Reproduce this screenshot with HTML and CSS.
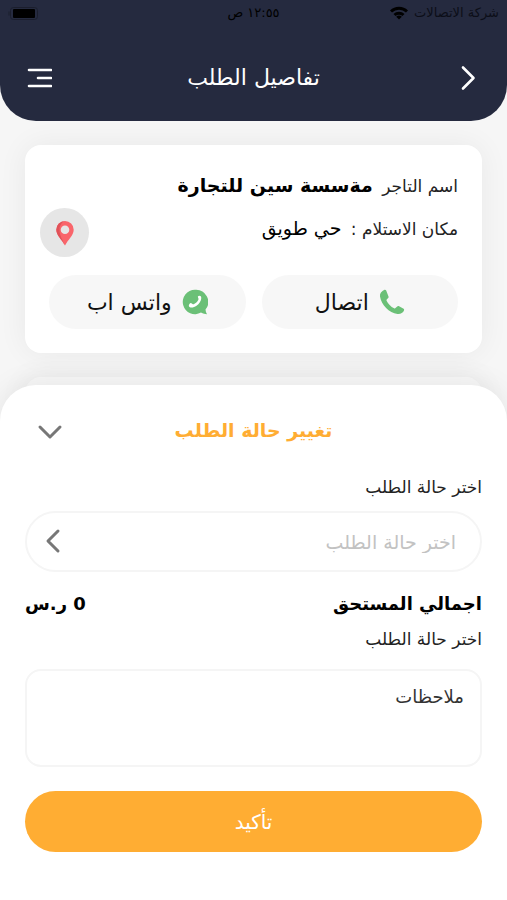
FILE: index.html
```html
<!DOCTYPE html>
<html lang="ar" dir="rtl">
  <head>
    <meta charset="UTF-8" />
    <meta name="viewport" content="width=device-width, initial-scale=1.0" />
    <title>تفاصيل الطلب</title>
    <link rel="stylesheet" href="styles.css">
  </head>
  <body>
    <header class="header">
      <div class="status-bar">
        <div class="carrier">
          <span>شركة الاتصالات</span>
          <svg width="18" height="14" viewBox="0 0 18 14" fill="none" stroke="#000" stroke-width="3">
            <path d="M1 5.5a11.5 11.5 0 0 1 16 0" />
            <path d="M4.5 9a6.5 6.5 0 0 1 9 0" />
            <path d="M9 13.5 6.2 10.8a4 4 0 0 1 5.6 0z" fill="#000" stroke="none" />
          </svg>
        </div>
        <span class="time">١٢:٥٥ ص</span>
        <svg class="battery" width="30" height="13" viewBox="0 0 30 13">
          <rect x="2.5" y="0.5" width="27" height="12" rx="3" fill="none" stroke="#1b1e2d" />
          <rect x="5" y="2" width="22" height="9" rx="1" fill="#000" />
          <path d="M1 4.5v4" stroke="#1b1e2d" />
        </svg>
      </div>
      <div class="nav-bar">
        <button class="icon-btn" type="button" aria-label="رجوع">
          <svg width="26" height="26" viewBox="0 0 26 26" fill="none" stroke="#fff" stroke-width="2.6" stroke-linecap="round" stroke-linejoin="round">
            <path d="M8 2.5L18.5 13 8 23.5" />
          </svg>
        </button>
        <h1>تفاصيل الطلب</h1>
        <button class="icon-btn" type="button" aria-label="القائمة">
          <svg width="26" height="26" viewBox="0 0 26 26" fill="none" stroke="#fff" stroke-width="2.6" stroke-linecap="round">
            <path d="M3 5h22M12 13h13M3 21h22" />
          </svg>
        </button>
      </div>
    </header>

    <main class="content">
      <section class="card">
        <div class="merchant">
          <div class="merchant-info">
            <p>اسم التاجر <strong>مةسسة سين للتجارة</strong></p>
            <p>مكان الاستلام : <span class="place">حي طويق</span></p>
          </div>
          <button class="map-btn" type="button" aria-label="الموقع على الخريطة">
            <svg width="20" height="26" viewBox="0 0 20 26">
              <path d="M10 1a8.7 8.7 0 0 0-8.7 8.7C1.3 15.5 7 19.5 10 25.5c3-6 8.7-10 8.7-15.8A8.7 8.7 0 0 0 10 1zm0 4.5a4.3 4.3 0 1 1 0 8.6 4.3 4.3 0 0 1 0-8.6z" fill="#f9656b" fill-rule="evenodd" />
              <path d="M10 1a8.7 8.7 0 0 0-8.7 8.7C1.3 15.5 7 19.5 10 25.5 7 19 4.5 15 4.5 9.7 4.5 5 7 2 10 1z" fill="#e05259" />
            </svg>
          </button>
        </div>
        <div class="actions">
          <button class="action" type="button">
            <svg width="26" height="26" viewBox="0 0 26 26">
              <path d="M5.5.8C2.5 2 .6 4.5 1 7.5 2.5 16 10 23.8 18.5 25c3 .4 5.5-1.5 6.5-3.6.3-.7.1-1.2-.4-1.6l-4.500-2.600c-.7-.4-1.400-.3-1.900.3l-1.700 1.600c-.4.5-.9.5-1.400.2-3.300-1.700-6-4.400-7.500-7.600-.3-.5-.1-1 .3-1.400l1.300-1.200c.5-.5.6-1 .3-1.600L7.200 1.500C6.800.8 6.200.6 5.500.8z" fill="#6bc077" />
            </svg>
            اتصال
          </button>
          <button class="action" type="button">
            <svg width="26" height="26" viewBox="0 0 26 26">
              <path d="M13 .8a12.2 12.2 0 1 0 6 22.8c2 1 4 1.7 6 1.7-.9-1.4-1.4-3-1.5-4.7A12.2 12.2 0 0 0 13 .8z" fill="#6bc077" />
              <path d="M17.2 6.800c-.8.1-1.500.6-1.300 1.300l.6 1.700c.1.5-.1 1-.4 1.500-1 1.700-2.300 3-4 3.800-.6.3-1.200.3-1.600-.1l-1.200-.8c-.6-.4-1.200 0-1.700.6-.9 1.200-1.100 2.500-.1 3.100 1.700 1 4.400.6 7-1.200 2.700-1.900 4.700-5 4.800-7.800 0-1.400-.8-2.200-2.100-2.100z" fill="#fff" />
            </svg>
            واتس اب
          </button>
        </div>
      </section>
      <section class="card card-next"></section>
    </main>

    <form class="sheet">
      <div class="sheet-head">
        <h2>تغيير حالة الطلب</h2>
        <button class="icon-btn" type="button" aria-label="إغلاق">
          <svg width="26" height="26" viewBox="0 0 26 26" fill="none" stroke="#777" stroke-width="3" stroke-linecap="round" stroke-linejoin="round">
            <path d="M3 10l10 10 10-10" />
          </svg>
        </button>
      </div>

      <label for="status">اختر حالة الطلب</label>
      <div class="select-wrap">
        <select id="status" name="status">
          <option value="">اختر حالة الطلب</option>
        </select>
        <svg class="select-arrow" width="26" height="26" viewBox="0 0 26 26" fill="none" stroke="#777" stroke-width="3" stroke-linecap="round" stroke-linejoin="round">
          <path d="M18 3L8 13l10 10" />
        </svg>
      </div>

      <div class="total">
        <span>اجمالي المستحق</span>
        <span>0 ر.س</span>
      </div>

      <label for="notes">اختر حالة الطلب</label>
      <textarea id="notes" name="notes" placeholder="ملاحظات"></textarea>

      <button class="submit" type="submit">تأكيد</button>
    </form>
  </body>
</html>
```
FILE: styles.css
```css
* {
  box-sizing: border-box;
  margin: 0;
  padding: 0;
}

body {
  min-height: 100vh;
  display: flex;
  flex-direction: column;
  background-color: #f6f6f6;
  color: #222;
  font-family: "DejaVu Sans", sans-serif;
  font-size: 17px;
  line-height: 24px;
}

button,
select,
textarea {
  font-family: inherit;
  color: inherit;
  border: none;
  background: none;
  outline: none;
}

button {
  cursor: pointer;
}

svg {
  display: block;
  flex-shrink: 0;
}

/* header */
.header {
  background-color: #252a3f;
  border-radius: 0 0 36px 36px;
  padding-bottom: 24px;
}

.status-bar {
  display: grid;
  grid-template-columns: 1fr auto 1fr;
  align-items: center;
  height: 26px;
  padding: 0 8px;
  color: #000;
  font-size: 13px;
}

.carrier {
  display: flex;
  align-items: center;
  gap: 6px;
  color: #0c0e18;
}

.battery {
  justify-self: end;
}

.nav-bar {
  display: flex;
  align-items: center;
  justify-content: space-between;
  padding: 32px 26px 0;
}

.nav-bar h1 {
  color: #fff;
  font-size: 22px;
  font-weight: 400;
  line-height: 39px;
}

.icon-btn {
  width: 26px;
  height: 26px;
}

/* merchant card */
.content {
  display: flex;
  flex-direction: column;
  gap: 24px;
  padding: 24px 25px 0;
}

.card {
  background-color: #fff;
  border-radius: 16px;
  padding: 24px;
  box-shadow: 0 0 30px rgba(0, 0, 0, 0.06);
}

.card-next {
  background-color: #f7f7f7;
}

.merchant {
  display: flex;
  justify-content: space-between;
  align-items: flex-end;
}

.merchant-info {
  display: flex;
  flex-direction: column;
  gap: 10px;
  padding-bottom: 12px;
}

.merchant-info p {
  line-height: 32px;
}

.merchant-info strong,
.place {
  color: #000;
  font-size: 19px;
  margin-right: 4px;
}

.map-btn {
  display: flex;
  align-items: center;
  justify-content: center;
  width: 49px;
  height: 49px;
  margin-left: -9px;
  border-radius: 50%;
  background-color: #e6e6e6;
}

.actions {
  display: flex;
  gap: 16px;
  margin-top: 18px;
}

.action {
  flex: 1;
  display: flex;
  align-items: center;
  justify-content: center;
  gap: 10px;
  height: 54px;
  border-radius: 27px;
  background-color: #f7f7f7;
  color: #111;
  font-size: 22px;
}

/* bottom sheet */
.sheet {
  flex: 1;
  display: flex;
  flex-direction: column;
  margin-top: -40px;
  padding: 29px 25px 48px;
  background-color: #fff;
  border-radius: 36px 36px 0 0;
  box-shadow: 0 0 30px rgba(0, 0, 0, 0.08);
}

.sheet-head {
  display: grid;
  grid-template-columns: 1fr auto 1fr;
  align-items: center;
  margin-bottom: 29px;
}

.sheet-head h2 {
  grid-column: 2;
  color: #ffad33;
  font-size: 19px;
  line-height: 32px;
}

.sheet-head .icon-btn {
  justify-self: end;
  margin-left: 12px;
}

.select-wrap {
  position: relative;
  margin: 12px 0 20px;
}

.select-wrap select {
  appearance: none;
  width: 100%;
  height: 61px;
  padding: 0 24px;
  border: 2px solid #f5f5f5;
  border-radius: 31px;
  color: #c2c2c2;
  font-size: 19px;
}

.select-arrow {
  position: absolute;
  top: 17px;
  left: 15px;
  pointer-events: none;
}

.total {
  display: flex;
  justify-content: space-between;
  margin-bottom: 11px;
  color: #000;
  font-size: 18px;
  font-weight: 700;
}

.sheet textarea {
  height: 98px;
  margin: 18px 0 24px;
  padding: 14px 16px;
  border: 2px solid #f5f5f5;
  border-radius: 16px;
  font-size: 18px;
  line-height: 24px;
  resize: none;
}

.sheet textarea::placeholder {
  color: #333;
}

.submit {
  height: 61px;
  border-radius: 31px;
  background-color: #ffad33;
  color: #fff;
  font-size: 20px;
}
```
